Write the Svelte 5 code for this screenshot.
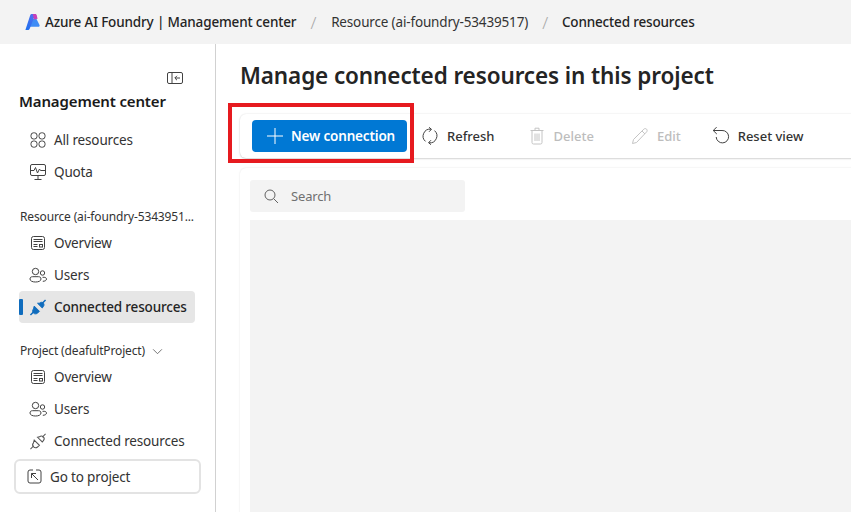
<script>
</script>

{#snippet overview()}
  <svg class="ico" viewBox="0 0 16 16" fill="none" stroke="#424242"><rect x="1.500" y="1.500" width="13" height="13" rx="2"/><path d="M3.500 4.500h9M3.500 6.500h9"/><path d="M3.500 9.500h4M3.500 11.500h4"/><rect x="9.500" y="9.500" width="3" height="2.500"/></svg>
{/snippet}
{#snippet users()}
  <svg class="ico wide" viewBox="0 0 18 16" fill="none" stroke="#424242"><circle cx="6.500" cy="4" r="3.200"/><path d="M1 11.500c0-1.500 1-2.300 2.500-2.300h6c1.500 0 2.500.8 2.500 2.300 0 2-2.500 3-5.500 3S1 13.500 1 11.500z"/><circle cx="13.500" cy="5.500" r="2.200"/><path d="M13.500 9.800h1.700c1.200 0 2.300.6 2.300 1.800 0 1.400-1.800 2.200-3.700 2.200"/></svg>
{/snippet}
{#snippet plugOutline()}
  <svg class="ico wide" viewBox="0 0 18 18" fill="none" stroke="#555" stroke-width="1.100"><path d="M1 17l3.500-3.500M13.500 4.500 17 1"/><path d="M5 7.500l5.500 5.500-2 1.800c-1.300 1-3 1-4.200-.1-1.200-1.200-1.300-3-.1-4.300z"/><path d="M8.500 4.500l5 5 1.200-1.400c1.100-1.300 1-3-.1-4-1.100-1.100-2.800-1.100-4 0z"/></svg>
{/snippet}

<div class="page">
  <header class="topbar">
    <svg class="logo" viewBox="0 0 15 16"><defs><linearGradient id="lg" x1="0" y1="1" x2="1" y2="0"><stop offset="0" stop-color="#1a70ee"/><stop offset="1" stop-color="#5a6ff0"/></linearGradient></defs><path d="M5 5h6.500l3 6c.5 1-.2 1.800-1.200 1.800H3z" fill="#3f8cf5"/><path d="M5.200 1.200C5.500.4 6 0 7 0h3.500L4.700 14.700c-.3.800-.9 1.300-1.800 1.300H.4z" fill="url(#lg)"/><path d="M7.800 0H10.200c.8 0 1.200.4 1.500 1.200l.9 3.600L9 5.600z" fill="#c73fb8"/></svg>
    <span class="brand">Azure AI Foundry | Management center</span>
    <span class="sep first-sep">/</span>
    <span class="crumb">Resource (ai-foundry-53439517)</span>
    <span class="sep">/</span>
    <span class="crumb current">Connected resources</span>
  </header>

  <div class="body">
    <aside class="sidebar">
      <div class="collapse-row">
        <svg class="collapse" viewBox="0 0 16 12" fill="none" stroke="#424242"><rect x=".5" y=".5" width="15" height="11" rx="1.500"/><path d="M5 .5v11"/><path d="M13 6H8M10 3.800 7.800 6 10 8.200"/></svg>
      </div>
      <h2 class="side-title">Management center</h2>
      <nav class="group first">
        <a class="item"><svg class="ico" viewBox="0 0 16 16" fill="none" stroke="#424242"><rect x="1" y=".8" width="6" height="6.200" rx="2.500"/><rect x="9" y=".8" width="6" height="6.200" rx="2.500"/><rect x="1" y="9" width="6" height="6.200" rx="2.500"/><rect x="9" y="9" width="6" height="6.200" rx="2.500"/></svg>All resources</a>
        <a class="item"><svg class="ico" viewBox="0 0 16 16" fill="none" stroke="#424242"><rect x=".5" y=".5" width="15" height="11" rx="1.500"/><path d="M1 6.500h3l1.500-3 2 5.500 2-4 1 1.500h4.500M8 11.500V15M4.500 15.500h7"/></svg>Quota</a>
      </nav>
      <div class="label res">Resource (ai-foundry-5343951...</div>
      <nav class="group">
        <a class="item">{@render overview()}Overview</a>
        <a class="item">{@render users()}Users</a>
        <a class="item active"><svg class="ico wide" viewBox="0 0 18 18" fill="#0f6cbd" stroke="#0f6cbd"><path d="M1 17l4-4M13 5l4-4" fill="none" stroke-width="1.600"/><path d="M5 7.500l5.500 5.500-2 2c-1.300 1-3.200 1-4.300-.1-1.100-1.100-1.200-3 0-4.400z"/><path d="M8.500 4.500l5 5 1-1.300c1.200-1.400 1.100-3 0-4-1.100-1-2.700-1-4 .2z"/></svg>Connected resources</a>
      </nav>
      <div class="label proj">Project (deafultProject)<svg class="chev" viewBox="0 0 12 8" fill="none" stroke="#616161"><path d="M1 1.500l5 5 5-5"/></svg></div>
      <nav class="group">
        <a class="item">{@render overview()}Overview</a>
        <a class="item">{@render users()}Users</a>
        <a class="item">{@render plugOutline()}Connected resources</a>
      </nav>
      <button class="goto"><svg class="ico small" viewBox="0 0 15 15" fill="none" stroke="#424242"><path d="M6 1H3a2 2 0 0 0-2 2v9a2 2 0 0 0 2 2h9a2 2 0 0 0 2-2V3a2 2 0 0 0-2-2H9"/><path d="M11 11 4.500 4.500M4.500 9V4.500H9"/></svg>Go to project</button>
    </aside>

    <main class="main">
      <h1>Manage connected resources in this project</h1>
      <div class="toolbar">
        <button class="primary"><svg class="plus" viewBox="0 0 16 16" stroke="#fff" fill="none"><path d="M8 0v16M0 8h16"/></svg>New connection</button>
        <button class="tool refresh"><svg class="tool-ico" viewBox="0 0 18 18" fill="none" stroke="#424242"><path d="M4.500 14.400A7 7 0 0 1 10 2.200M13.500 3.600A7 7 0 0 1 8 15.800"/><path d="M8 .3l2.500 2-2.500 2.500M10 13.200l-2.500 2.500 2.500 2"/></svg>Refresh</button>
        <button class="tool disabled del"><svg class="tool-ico" viewBox="0 0 18 18" fill="none" stroke="#c4c4c4"><path d="M2.500 3.500h13M4 3.500v12a1.500 1.500 0 0 0 1.500 1.500h7a1.500 1.500 0 0 0 1.500-1.500v-12M7 3V1.200h4V3M7 6.500V14M9 6.500V14M11 6.500V14"/></svg>Delete</button>
        <button class="tool disabled edit"><svg class="tool-ico" viewBox="0 0 18 18" fill="none" stroke="#c4c4c4"><path d="M1.500 16.500l1-4L12.800 2.200c.8-.8 2-.8 2.800 0 .7.700.7 1.900 0 2.700L5.500 15.500zM11 4l3 3"/></svg>Edit</button>
        <button class="tool reset"><svg class="tool-ico" viewBox="0 0 18 18" fill="none" stroke="#424242"><path d="M1.200 3.500H10A6.200 6.200 0 1 1 4.200 10"/><path d="M4.800 0 1.200 3.500 4.800 7"/></svg>Reset view</button>
      </div>
      <section class="panel">
        <div class="search"><svg class="search-ico" viewBox="0 0 15 15" fill="none" stroke="#616161"><circle cx="6" cy="6" r="5"/><path d="M9.700 9.700 14 14"/></svg><span>Search</span></div>
        <div class="grid-area"></div>
      </section>
      <div class="annotation"></div>
    </main>
  </div>
</div>

<style>
  :global(body) { margin: 0; background: #fff; }
  .page { width: 851px; height: 512px; overflow: hidden; font-family: "Noto Sans", "Open Sans", sans-serif; font-size: 13.500px; color: #242424; letter-spacing: -0.16px; }
  .topbar { height: 44px; background: #f3f3f3; display: flex; align-items: center; padding-left: 25px; box-sizing: border-box; }
  .logo { width: 15px; height: 16px; margin-right: 5px; }
  .brand { font-weight: 500; }
  .sep { color: #a8a8a8; margin: 0 14px; font-size: 17px; font-weight: 300; }
  .first-sep { margin-right: 15px; }
  .crumb { color: #333; }
  .crumb.current { font-weight: 500; color: #242424; }
  .body { display: flex; height: 468px; }
  .sidebar { width: 216px; box-sizing: border-box; border-right: 1px solid #d1d1d1; padding: 0 19px; flex: none; display: flex; flex-direction: column; }
  .collapse-row { display: flex; justify-content: flex-end; padding: 28px 0 0 0; height: 13px; }
  .collapse { width: 16px; height: 12px; margin-right: 13px; }
  .side-title { margin: 5px 0 0; font-size: 15px; line-height: 22px; font-weight: 600; color: #1a1a1a; letter-spacing: -0.14px; }
  .group { display: flex; flex-direction: column; width: 176px; }
  .group.first { margin-top: 12px; }
  .item { height: 32px; display: flex; align-items: center; padding-left: 11px; box-sizing: border-box; border-radius: 4px; color: #333; position: relative; white-space: nowrap; }
  .item.active { background: #e6e6e6; font-weight: 500; color: #242424; }
  .item.active::before { content: ""; position: absolute; left: 0; top: 8px; width: 4px; height: 16px; background: #0f6cbd; border-radius: 1px; }
  .ico { width: 16px; height: 16px; margin-right: 8px; flex: none; }
  .ico.wide { width: 18px; height: 17px; margin-left: -1px; margin-right: 7px; }
  .ico.small { width: 15px; height: 15px; margin-right: 8px; }
  .label { font-size: 12px; color: #333; line-height: 16px; white-space: nowrap; letter-spacing: -0.15px; }
  .label.res { margin-top: 21px; margin-left: 1px; margin-bottom: 2px; }
  .label.proj { margin-top: 20px; margin-left: 1px; margin-bottom: 2px; display: flex; align-items: center; }
  .chev { width: 11px; height: 7px; margin-left: 7px; }
  .goto { margin: 2px 0 0 -5px; width: 187px; height: 35px; flex: none; box-sizing: border-box; border: 2px solid #e3e3e3; border-radius: 6px; background: #fff; display: flex; align-items: center; padding: 0 0 0 11px; font: inherit; color: #333; letter-spacing: inherit; }
  .main { flex: 1; min-width: 0; padding: 0 0 0 24px; position: relative; }
  h1 { margin: 0; padding-top: 15px; font-size: 22.500px; line-height: 34px; font-weight: 600; color: #242424; letter-spacing: -0.11px; white-space: nowrap; }
  .toolbar { margin-top: 21px; height: 44px; width: 640px; box-sizing: border-box; border-radius: 6px; background: #fff; box-shadow: 0 0 2px rgba(0,0,0,.12), 0 1px 2px rgba(0,0,0,.14); display: flex; align-items: center; padding-left: 12px; }
  button { cursor: default; }
  .primary { width: 155px; height: 32px; background: #0078d4; color: #fff; border: 0; border-radius: 4px; font: inherit; font-weight: 600; letter-spacing: inherit; display: flex; align-items: center; padding: 0 0 0 15px; flex: none; white-space: nowrap; }
  .plus { width: 16px; height: 16px; margin-right: 8px; }
  .tool { background: none; border: 0; font: inherit; font-weight: 500; font-size: 13px; letter-spacing: 0; color: #333; display: flex; align-items: center; padding: 0; white-space: nowrap; flex: none; }
  .tool.disabled { color: #bdbdbd; }
  .tool-ico { width: 18px; height: 18px; margin-right: 8px; }
  .refresh { margin-left: 14px; }
  .del { margin-left: 33px; }
  .edit { margin-left: 37px; }
  .reset { margin-left: 31px; }
  .panel { margin-top: 10px; height: 400px; width: 640px; box-sizing: border-box; padding: 12px 0 0 10px; border-radius: 6px; box-shadow: 0 0 2px rgba(0,0,0,.12); background: #fff; }
  .search { width: 215px; height: 32px; background: #f3f3f3; border-radius: 3px; display: flex; align-items: center; padding-left: 14px; box-sizing: border-box; color: #707070; font-size: 13px; }
  .search-ico { width: 15px; height: 15px; margin-right: 12px; }
  .grid-area { margin-top: 8px; height: 300px; background: #f3f3f3; }
  .annotation { position: absolute; left: 12px; top: 59px; width: 186px; height: 60px; border: 4px solid #e61a1f; box-sizing: border-box; pointer-events: none; }
</style>
